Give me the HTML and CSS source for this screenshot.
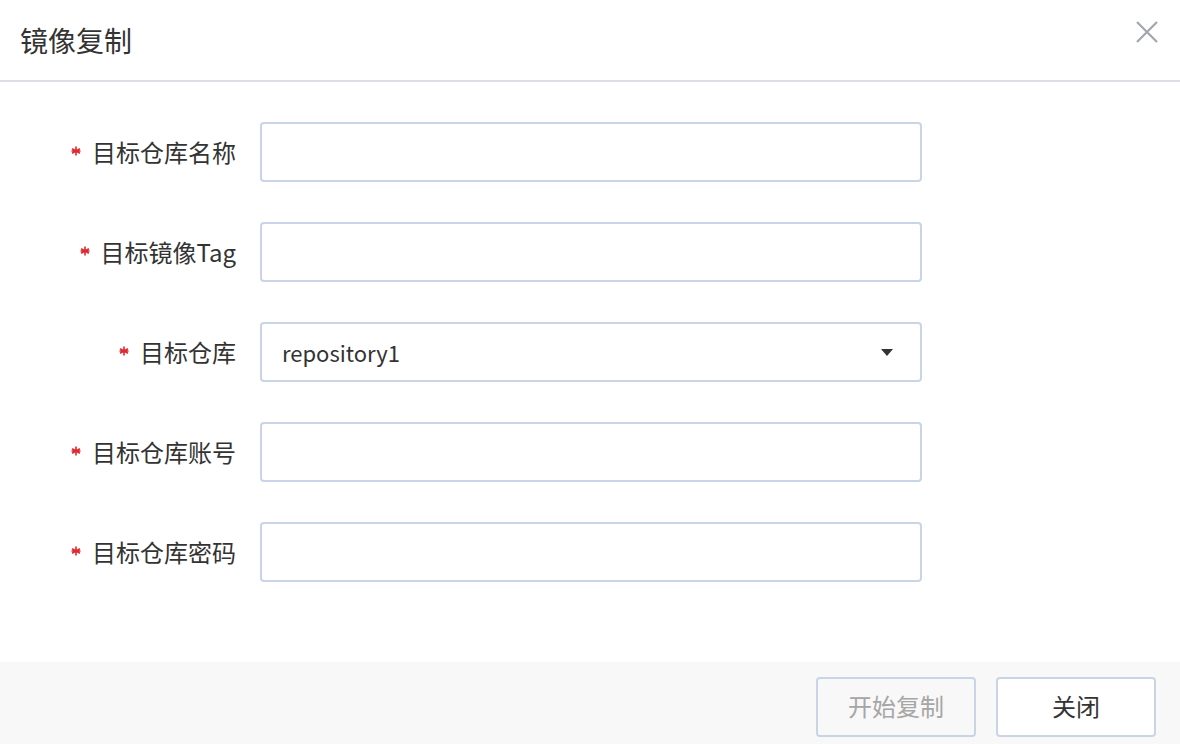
FILE: index.html
```html
<!DOCTYPE html>
<html lang="zh-CN">
<head>
<meta charset="utf-8">
<title>镜像复制</title>
<link rel="stylesheet" href="styles.css">
</head>
<body>
<div class="dialog">
  <header class="dlg-header">
    <h1 class="dlg-title">镜像复制</h1>
    <button class="dlg-close" aria-label="关闭">
      <svg width="22" height="22" viewBox="0 0 22 22"><path d="M1 1L21 21M21 1L1 21" stroke="#a2a6ae" stroke-width="2.2" fill="none"/></svg>
    </button>
  </header>
  <main class="dlg-body">
    <form class="form">
      <label class="f-label"><svg class="req" width="10" height="10" viewBox="0 0 10 10"><path d="M5 0.5V9.5M1.1 2.75L8.9 7.25M8.9 2.75L1.1 7.25M0.5 5H9.5" stroke="#e0282e" stroke-width="1.6" fill="none"/></svg>目标仓库名称</label>
      <input class="f-input" type="text">
      <label class="f-label"><svg class="req" width="10" height="10" viewBox="0 0 10 10"><path d="M5 0.5V9.5M1.1 2.75L8.9 7.25M8.9 2.75L1.1 7.25M0.5 5H9.5" stroke="#e0282e" stroke-width="1.6" fill="none"/></svg>目标镜像Tag</label>
      <input class="f-input" type="text">
      <label class="f-label"><svg class="req" width="10" height="10" viewBox="0 0 10 10"><path d="M5 0.5V9.5M1.1 2.75L8.9 7.25M8.9 2.75L1.1 7.25M0.5 5H9.5" stroke="#e0282e" stroke-width="1.6" fill="none"/></svg>目标仓库</label>
      <div class="f-input f-select">
        <span class="sel-text">repository1</span>
        <svg class="caret" width="12" height="7" viewBox="0 0 12 7"><path d="M0 0H12L6 7Z" fill="#333"/></svg>
      </div>
      <label class="f-label"><svg class="req" width="10" height="10" viewBox="0 0 10 10"><path d="M5 0.5V9.5M1.1 2.75L8.9 7.25M8.9 2.75L1.1 7.25M0.5 5H9.5" stroke="#e0282e" stroke-width="1.6" fill="none"/></svg>目标仓库账号</label>
      <input class="f-input" type="text">
      <label class="f-label"><svg class="req" width="10" height="10" viewBox="0 0 10 10"><path d="M5 0.5V9.5M1.1 2.75L8.9 7.25M8.9 2.75L1.1 7.25M0.5 5H9.5" stroke="#e0282e" stroke-width="1.6" fill="none"/></svg>目标仓库密码</label>
      <input class="f-input" type="password">
    </form>
  </main>
  <footer class="dlg-footer">
    <button class="btn btn-disabled" disabled>开始复制</button>
    <button class="btn">关闭</button>
  </footer>
</div>
</body>
</html>
```
FILE: styles.css
```css
html, body {
  margin: 0;
  padding: 0;
  background: #fff;
  overflow: hidden;
}
body {
  font-family: "Noto Sans CJK SC", "Microsoft YaHei", sans-serif;
  color: #333;
}
.dialog {
  width: 1180px;
  height: 744px;
  display: flex;
  flex-direction: column;
  overflow: hidden;
}
.dlg-header {
  height: 80px;
  border-bottom: 2px solid #dcdfe8;
  display: flex;
  align-items: center;
  justify-content: space-between;
  padding: 0 21px 0 20px;
  flex-shrink: 0;
}
.dlg-title {
  margin: 0;
  font-size: 28px;
  font-weight: 400;
  color: #333;
  line-height: 1;
}
.dlg-close {
  border: none;
  background: none;
  padding: 0;
  width: 24px;
  height: 24px;
  display: flex;
  align-items: center;
  justify-content: center;
  margin-bottom: 16px;
  cursor: pointer;
}
.dlg-body {
  padding: 40px 0 80px;
  flex-shrink: 0;
}
.form {
  display: grid;
  grid-template-columns: 236px 662px;
  column-gap: 24px;
  row-gap: 40px;
  align-items: center;
}
.f-label {
  display: flex;
  align-items: center;
  justify-content: flex-end;
  font-size: 24px;
  color: #333;
  line-height: 1;
}
.req {
  display: block;
  margin-right: 11px;
  margin-bottom: 3px;
  flex-shrink: 0;
}
.f-input {
  box-sizing: border-box;
  height: 60px;
  width: 662px;
  border: 2px solid #c9d4e6;
  border-radius: 4px;
  background: #fff;
  font-family: inherit;
  font-size: 24px;
  padding: 0 20px;
  margin: 0;
  outline: none;
}
.f-select {
  display: flex;
  align-items: center;
  justify-content: space-between;
  padding: 0 27px 0 20px;
}
.sel-text {
  color: #333;
  font-size: 22px;
}
.caret {
  display: block;
}
.dlg-footer {
  flex: 1;
  background: #f8f8f8;
  display: flex;
  justify-content: flex-end;
  align-items: flex-start;
  gap: 20px;
  padding: 15px 24px 0;
}
.btn {
  box-sizing: border-box;
  width: 160px;
  height: 60px;
  border: 2px solid #c9d4e6;
  border-radius: 4px;
  background: #fff;
  font-family: inherit;
  font-size: 24px;
  color: #333;
  padding: 0 0 3px;
  cursor: pointer;
}
.btn-disabled {
  background: #f8f8f8;
  color: #a6a6a6;
  cursor: not-allowed;
}
```
